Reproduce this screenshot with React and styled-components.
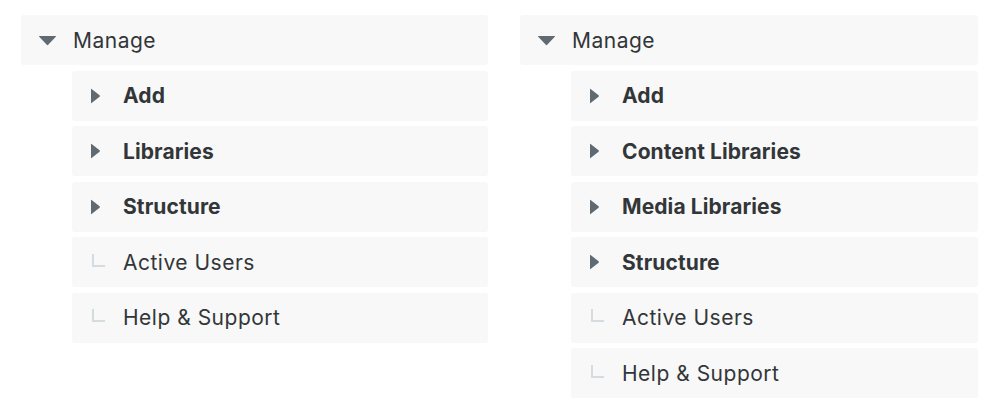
import React from 'react'
import styled, { createGlobalStyle } from 'styled-components'

const Global = createGlobalStyle`
  body {
    margin: 0;
    background: #fff;
    font-family: Inter, "Open Sans", sans-serif;
    color: #333638;
  }
`

const Page = styled.div`
  display: flex;
  align-items: flex-start;
  padding: 15px 0 0 21px;
  gap: 32px;
`

const Tree = styled.div`
  width: ${p => p.$width}px;
  display: flex;
  flex-direction: column;
  gap: 5.5px;
`

const Row = styled.div`
  height: 50px;
  box-sizing: border-box;
  background: #f8f8f8;
  border-radius: 3px;
  display: flex;
  align-items: center;
  margin-left: ${p => (p.$child ? 51 : 0)}px;
  padding-left: ${p => (p.$child ? 18 : 17)}px;
  font-size: 21px;
  letter-spacing: ${p => (p.$bold ? 0.1 : 0.5)}px;
  font-weight: ${p => (p.$bold ? 700 : 400)};
`

const Icon = styled.span`
  width: ${p => (p.$wide ? 35 : 33)}px;
  flex: none;
  display: flex;
  align-items: center;
`

const Leaf = styled.span`
  width: 11px;
  height: 11px;
  margin-left: 2px;
  margin-top: -4px;
  border-left: 2px solid #d5dce0;
  border-bottom: 2px solid #d5dce0;
`

const Down = () => (
  <svg width="19" height="11" viewBox="0 0 19 11">
    <path d="M1.5 1 L17.5 1 Q18.5 1 17.8 1.8 L10.2 9.8 Q9.5 10.6 8.8 9.8 L1.2 1.8 Q0.5 1 1.5 1 Z" fill="#5f6a72" />
  </svg>
)

const Right = () => (
  <svg width="11" height="16" viewBox="0 0 11 16">
    <path d="M1 1.5 L1 14.5 Q1 15.6 1.9 14.8 L9.6 8.7 Q10.3 8 9.6 7.3 L1.9 1.2 Q1 0.4 1 1.5 Z" fill="#5f6a72" />
  </svg>
)

function Item({ kind, label }) {
  if (kind === 'leaf') {
    return (
      <Row $child>
        <Icon><Leaf /></Icon>
        {label}
      </Row>
    )
  }
  return (
    <Row $child $bold>
      <Icon><Right /></Icon>
      {label}
    </Row>
  )
}

function Menu({ width, items }) {
  return (
    <Tree $width={width}>
      <Row>
        <Icon $wide><Down /></Icon>
        Manage
      </Row>
      {items.map(it => (
        <Item key={it.label} {...it} />
      ))}
    </Tree>
  )
}

const left = [
  { kind: 'branch', label: 'Add' },
  { kind: 'branch', label: 'Libraries' },
  { kind: 'branch', label: 'Structure' },
  { kind: 'leaf', label: 'Active Users' },
  { kind: 'leaf', label: 'Help & Support' },
]

const right = [
  { kind: 'branch', label: 'Add' },
  { kind: 'branch', label: 'Content Libraries' },
  { kind: 'branch', label: 'Media Libraries' },
  { kind: 'branch', label: 'Structure' },
  { kind: 'leaf', label: 'Active Users' },
  { kind: 'leaf', label: 'Help & Support' },
]

export default function App() {
  return (
    <>
      <Global />
      <Page>
        <Menu width={467} items={left} />
        <Menu width={458} items={right} />
      </Page>
    </>
  )
}
